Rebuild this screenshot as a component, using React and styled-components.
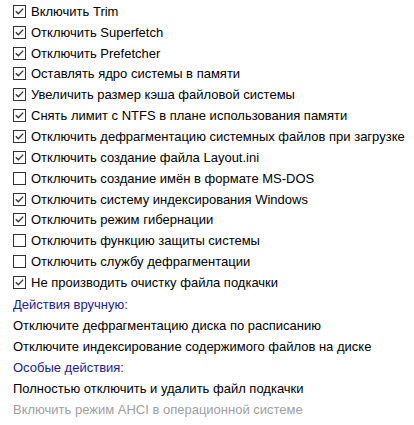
import React from "react";
import styled, { createGlobalStyle } from "styled-components";

const Global = createGlobalStyle`
  html, body { margin: 0; padding: 0; background: #fff; }
  body { font-family: "Liberation Sans", Arial, sans-serif; }
`;

const Panel = styled.div`
  width: 414px;
  height: 425px;
  padding: 1px 0 0 13px;
  box-sizing: border-box;
  display: flex;
  flex-direction: column;
  font-size: 13px;
  color: #000;
`;

const Row = styled.label`
  display: flex;
  align-items: center;
  height: 20.85px;
  gap: 5px;
  white-space: nowrap;
`;

const Box = styled.span`
  width: 13px;
  height: 13px;
  box-sizing: border-box;
  border: 1px solid #333;
  background: #fff;
  display: flex;
  align-items: center;
  justify-content: center;
  flex: none;
`;

const Section = styled.div`
  margin-top: 1px;
  display: flex;
  flex-direction: column;
`;

const Line = styled.div`
  height: 21.1px;
  display: flex;
  align-items: center;
  white-space: nowrap;
  color: ${(p) => (p.$kind === "head" ? "#1c1c90" : p.$kind === "off" ? "#a0a0a0" : "#000")};
`;

const Check = () => (
  <svg width="11" height="11" viewBox="0 0 11 11">
    <path d="M1.8 5.3 L4.3 7.8 L9.2 2.6" fill="none" stroke="#333" strokeWidth="1.3" />
  </svg>
);

const items = [
  ["Включить Trim", true],
  ["Отключить Superfetch", true],
  ["Отключить Prefetcher", true],
  ["Оставлять ядро системы в памяти", true],
  ["Увеличить размер кэша файловой системы", true],
  ["Снять лимит с NTFS в плане использования памяти", true],
  ["Отключить дефрагментацию системных файлов при загрузке", true],
  ["Отключить создание файла Layout.ini", true],
  ["Отключить создание имён в формате MS-DOS", false],
  ["Отключить систему индексирования Windows", true],
  ["Отключить режим гибернации", true],
  ["Отключить функцию защиты системы", false],
  ["Отключить службу дефрагментации", false],
  ["Не производить очистку файла подкачки", true],
];

const lines = [
  ["Действия вручную:", "head"],
  ["Отключите дефрагментацию диска по расписанию", "text"],
  ["Отключите индексирование содержимого файлов на диске", "text"],
  ["Особые действия:", "head"],
  ["Полностью отключить и удалить файл подкачки", "text"],
  ["Включить режим AHCI в операционной системе", "off"],
];

export default function App() {
  return (
    <>
      <Global />
      <Panel>
        {items.map(([t, c]) => (
          <Row key={t}>
            <Box>{c && <Check />}</Box>
            <span>{t}</span>
          </Row>
        ))}
        <Section>
          {lines.map(([t, k]) => (
            <Line key={t} $kind={k}>{t}</Line>
          ))}
        </Section>
      </Panel>
    </>
  );
}
